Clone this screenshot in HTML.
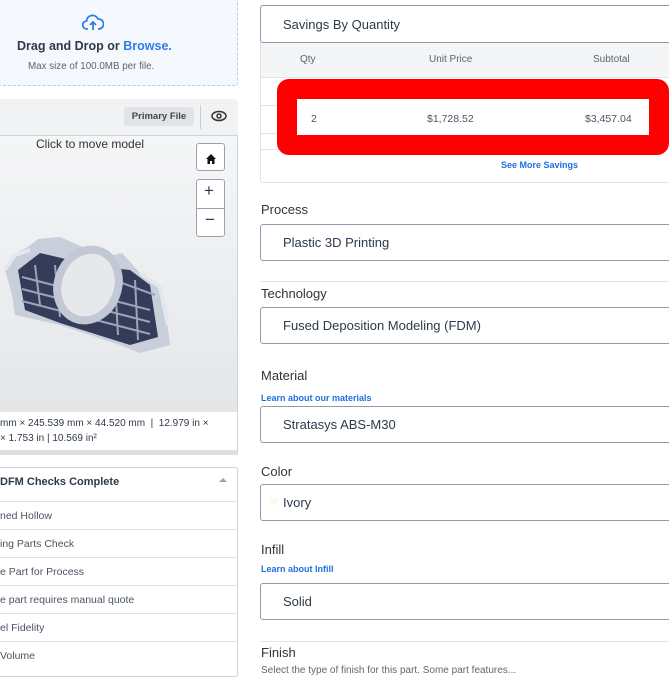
<!DOCTYPE html>
<html><head><style>
*{box-sizing:border-box;margin:0;padding:0}
body{width:669px;height:669px;overflow:hidden;background:#fff;font-family:"Liberation Sans",sans-serif;color:#2d3a4a;position:relative}
.a{position:absolute}
.upl{left:-4px;top:-4px;width:242px;height:90px;border:1px dashed #b9cdea;background:#f5f8fd;border-radius:3px}
.tb{left:0;top:99px;width:238px;height:37px;background:#f1f2f4;border-radius:0 4px 0 0}
.view{left:0;top:135px;width:238px;height:278px;background:linear-gradient(#f5f6f7,#e4e6e8);border:1px solid #cfd3d8;border-left:none}
.btn{background:#fff;border:1px solid #9aa3ad;border-radius:3px;width:29px;text-align:center;font-size:18px;color:#222}
.sel{left:260px;width:420px;height:37px;border:1px solid #8f9bab;border-radius:3px;font-size:13px;color:#2d3a4a;padding:10px 0 0 22px}
.lbl{left:261px;font-size:13px;color:#333}
.lnk{left:261px;font-size:9px;color:#1f72e0;font-weight:bold}
.row{left:0;width:238px;height:28px;border-top:1px solid #dde1e5;font-size:10.5px;color:#4a5563;padding:8px 0 0 0}
</style></head><body>
<div class="a upl"></div>
<svg class="a" style="left:82px;top:14px" width="22" height="18" viewBox="0 0 22 18"><path d="M6 15H5a4 4 0 0 1-.5-8A6 6 0 0 1 16 5a4.5 4.5 0 0 1 1 10h-1" fill="none" stroke="#2f7de6" stroke-width="1.8"/><path d="M11 16V8M8 11l3-3 3 3" fill="none" stroke="#2f7de6" stroke-width="1.8"/></svg>
<div class="a" style="left:17px;top:39px;font-size:12.5px;font-weight:bold;color:#2d3a4a">Drag and Drop or <span style="color:#2f7de6">Browse.</span></div>
<div class="a" style="left:28px;top:61px;font-size:9.8px;color:#5a6470">Max size of 100.0MB per file.</div>
<div class="a tb"></div>
<div class="a" style="left:124px;top:107px;width:70px;height:19px;background:#e1e3e6;border-radius:3px;font-size:9.5px;font-weight:bold;color:#3d4650;text-align:center;padding-top:4px">Primary File</div>
<div class="a" style="left:200px;top:105px;width:1px;height:24px;background:#c8ccd1"></div>
<svg class="a" style="left:211px;top:110px" width="16" height="12" viewBox="0 0 16 12"><ellipse cx="8" cy="6" rx="7" ry="4.5" fill="none" stroke="#333" stroke-width="1.5"/><circle cx="8" cy="6" r="2" fill="none" stroke="#333" stroke-width="1.5"/></svg>
<div class="a view"></div>
<div class="a" style="left:36px;top:137px;font-size:12px;color:#333">Click to move model</div>
<div class="a btn" style="left:196px;top:143px;height:28px;padding-top:5px"><svg width="12" height="12" viewBox="0 0 12 12"><path d="M1 6L6 1l5 5H9.5v5H7V8H5v3H2.5V6z" fill="#111"/></svg></div>
<div class="a btn" style="left:196px;top:179px;height:58px"></div>
<div class="a" style="left:196px;top:208px;width:29px;height:1px;background:#9aa3ad"></div>
<div class="a" style="left:204px;top:181px;font-size:17px">+</div>
<div class="a" style="left:205px;top:210px;font-size:17px">−</div>
<svg class="a" style="left:0;top:225px" width="175" height="130" viewBox="0 0 175 130">
<path d="M5 45L12 30 28 22 38 14 60 12 105 32 122 28 140 48 160 62 165 80 170 120 140 128 120 120 60 100 15 90 12 70z" fill="#c8cfdb"/>
<path d="M18 45L40 28 100 42 130 45 150 60 158 112 130 120 60 98 25 85z" fill="#353c5a"/>
<g stroke="#9aa5b8" stroke-width="2"><path d="M22 52L150 85M22 64L150 97M22 76L150 109M100 50L155 70M35 40L40 80M55 40L60 92M115 55L118 110M135 55L138 115"/></g>
<ellipse cx="88" cy="60" rx="30" ry="36" transform="rotate(20 88 60)" fill="#e6e8eb" stroke="#c2c9d4" stroke-width="8"/>
<path d="M5 45L15 30 30 25M140 48L160 62 168 100" fill="none" stroke="#e3e7ee" stroke-width="4"/>
</svg>
<div class="a" style="left:0;top:412px;width:238px;height:43px;background:#fff;border-bottom:5px solid #dcdfe3;border-right:1px solid #cfd3d8;font-size:10px;color:#2d3a4a;padding:4px 0 0 0;line-height:15px">mm × 245.539 mm × 44.520 mm &nbsp;| &nbsp;12.979 in ×<br>× 1.753 in | 10.569 in²</div>
<div class="a" style="left:-2px;top:467px;width:240px;height:210px;border:1px solid #cfd3d8;border-radius:3px"></div>
<div class="a" style="left:0;top:476px;font-size:11px;font-weight:bold;color:#2d3a4a">DFM Checks Complete</div>
<div class="a" style="left:219px;top:478px;width:0;height:0;border-left:4px solid transparent;border-right:4px solid transparent;border-bottom:4px solid #9aa3ad"></div>
<div class="a row" style="top:501px">ned Hollow</div>
<div class="a row" style="top:529px">ing Parts Check</div>
<div class="a row" style="top:557px">e Part for Process</div>
<div class="a row" style="top:585px">e part requires manual quote</div>
<div class="a row" style="top:613px">el Fidelity</div>
<div class="a row" style="top:641px">Volume</div>

<div class="a" style="left:260px;top:5px;width:420px;height:178px;border:1px solid #e1e4e8;border-radius:3px"></div>
<div class="a sel" style="top:5px;height:38px;padding-top:11px">Savings By Quantity</div>
<div class="a" style="left:261px;top:43px;width:408px;height:35px;background:#f4f5f7;border-bottom:1px solid #e1e4e8"></div>
<div class="a" style="left:300px;top:54px;font-size:10px;color:#5a6470">Qty</div>
<div class="a" style="left:429px;top:54px;font-size:10px;color:#5a6470">Unit Price</div>
<div class="a" style="left:593px;top:54px;font-size:10px;color:#5a6470">Subtotal</div>
<div class="a" style="left:261px;top:105px;width:408px;height:1px;background:#e1e4e8"></div>
<div class="a" style="left:261px;top:133px;width:408px;height:1px;background:#e1e4e8"></div>
<div class="a" style="left:261px;top:149px;width:408px;height:1px;background:#e1e4e8"></div>
<div class="a" style="left:277px;top:79px;width:392px;height:76px;border:20px solid #ff0000;border-radius:12px;background:#fff"></div>
<div class="a" style="left:311px;top:113px;font-size:10.5px;color:#4a5563">2</div>
<div class="a" style="left:427px;top:113px;font-size:10.5px;color:#4a5563">$1,728.52</div>
<div class="a" style="left:585px;top:113px;font-size:10.5px;color:#4a5563">$3,457.04</div>
<div class="a" style="left:501px;top:160px;font-size:9px;font-weight:bold;color:#1f72e0">See More Savings</div>

<div class="a lbl" style="top:202px">Process</div>
<div class="a sel" style="top:224px">Plastic 3D Printing</div>
<div class="a" style="left:260px;top:281px;width:409px;height:1px;background:#e1e4e8"></div>
<div class="a lbl" style="top:286px">Technology</div>
<div class="a sel" style="top:307px">Fused Deposition Modeling (FDM)</div>
<div class="a lbl" style="top:368px">Material</div>
<div class="a lnk" style="top:393px">Learn about our materials</div>
<div class="a sel" style="top:406px">Stratasys ABS-M30</div>
<div class="a lbl" style="top:464px">Color</div>
<div class="a sel" style="top:484px;padding-left:22px">Ivory</div>
<div class="a" style="left:270px;top:498px;width:7px;height:7px;background:#fbfbe8"></div>
<div class="a lbl" style="top:542px">Infill</div>
<div class="a lnk" style="top:564px">Learn about Infill</div>
<div class="a sel" style="top:583px">Solid</div>
<div class="a" style="left:260px;top:641px;width:409px;height:1px;background:#e1e4e8"></div>
<div class="a lbl" style="top:645px">Finish</div>
<div class="a" style="left:261px;top:665px;font-size:10px;color:#666">Select the type of finish for this part. Some part features...</div>
</body></html>
